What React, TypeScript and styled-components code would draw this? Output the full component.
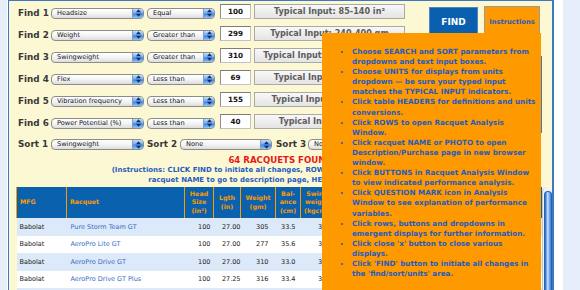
import React from 'react';
import styled, { createGlobalStyle } from 'styled-components';

const GlobalStyle = createGlobalStyle`
  html, body { margin: 0; padding: 0; }
  body {
    background: #e5eefa;
    font-family: "DejaVu Sans", Verdana, sans-serif;
    overflow: hidden;
  }
`;

const Page = styled.div`
  height: 290px;
  padding-left: 7px;
`;

const Frame = styled.div`
  width: 556px;
  height: 100%;
  box-sizing: border-box;
  background: #ffffff;
  padding: 0 9px 0 1px;
`;

const Panel = styled.div`
  position: relative;
  height: 100%;
  box-sizing: border-box;
  background: #fcf8d3;
  border: 1px solid #3f78c2;
  border-right-width: 2px;
  border-bottom: none;
  overflow: hidden;
`;

const Controls = styled.div`
  display: grid;
  grid-template-columns: 387px 113px;
  column-gap: 24px;
  padding: 1px 0 0 9px;
`;

const Rows = styled.div`
  display: flex;
  flex-direction: column;
`;

const Row = styled.div<{ $h: number }>`
  display: flex;
  align-items: center;
  height: ${(p) => p.$h}px;
`;

const Label = styled.span<{ $w: number; $ml?: number }>`
  width: ${(p) => p.$w}px;
  margin-left: ${(p) => p.$ml ?? 0}px;
  flex-shrink: 0;
  font-size: 8.8px;
  font-weight: bold;
  color: #383838;
  white-space: nowrap;
  margin-top: -1px;
`;

const Select = styled.div<{ $w: number; $ml?: number }>`
  display: flex;
  align-items: stretch;
  flex-shrink: 0;
  width: ${(p) => p.$w}px;
  margin-left: ${(p) => p.$ml ?? 0}px;
  height: 11px;
  box-sizing: border-box;
  border: 1px solid #8c8c8c;
  border-radius: 4px;
  background: linear-gradient(#ffffff, #f4f4f4 50%, #dddddd);
  overflow: hidden;
`;

const SelText = styled.span`
  flex: 1;
  padding-left: 5px;
  font-size: 6.6px;
  line-height: 9px;
  color: #111;
  white-space: nowrap;
  overflow: hidden;
`;

const SelArrow = styled.span`
  width: 10px;
  display: flex;
  align-items: center;
  justify-content: center;
  background: linear-gradient(#c4e0fc, #72acf0 45%, #3c83e6 55%, #94c6f7);
  border-left: 1px solid #7f9fc8;
`;

const NumBox = styled.div<{ $ml: number }>`
  width: 31px;
  height: 15px;
  margin-left: ${(p) => p.$ml}px;
  margin-top: -3px;
  flex-shrink: 0;
  box-sizing: border-box;
  background: #fff;
  border: 1px solid #c2c2c2;
  border-top-color: #7c7c7c;
  border-left-color: #8e8e8e;
  font-size: 7.2px;
  font-weight: bold;
  color: #111;
  text-align: center;
  line-height: 13px;
`;

const Typical = styled.div<{ $ml: number }>`
  width: 151px;
  height: 15px;
  margin-left: ${(p) => p.$ml}px;
  margin-top: -3px;
  flex-shrink: 0;
  box-sizing: border-box;
  background: linear-gradient(#f8f8f8, #e4e4e4);
  border: 1px solid #a9a9a9;
  font-size: 8.1px;
  font-weight: bold;
  color: #5c5c5c;
  text-align: center;
  line-height: 13px;
  white-space: nowrap;
  overflow: hidden;
`;

const Side = styled.div`
  display: flex;
  flex-direction: column;
`;

const ButtonRow = styled.div`
  display: flex;
  align-items: flex-start;
  gap: 6px;
  margin-top: 4px;
`;

const FindButton = styled.div`
  width: 49px;
  height: 29px;
  margin-top: 1px;
  box-sizing: border-box;
  background: #0a60ae;
  border: 1px solid #4a86c8;
  color: #fff;
  font-size: 9px;
  font-weight: bold;
  display: flex;
  align-items: center;
  justify-content: center;
`;

const InstrButton = styled.div`
  width: 56px;
  height: 31px;
  box-sizing: border-box;
  background: #ff9900;
  border: 1px solid #9a9a9a;
  color: #1f5cbf;
  font-size: 6.7px;
  font-weight: bold;
  display: flex;
  align-items: center;
  justify-content: center;
`;

const PhotoBox = styled.div`
  margin-top: 19px;
  height: 77px;
  box-sizing: border-box;
  border: 1px solid #3f78c2;
`;

const Status = styled.div`
  text-align: center;
  font-size: 8.6px;
  font-weight: bold;
  line-height: 11px;
  color: #e81818;
`;

const Hint = styled.div`
  text-align: center;
  font-size: 7px;
  font-weight: bold;
  line-height: 9.5px;
  color: #1f5cbf;
  white-space: nowrap;
`;

const TableArea = styled.div`
  display: flex;
  margin: 2px 0 0 7px;
  height: 110px;
`;

const TableWrap = styled.div`
  width: 527px;
  overflow: hidden;
`;

const Grid = styled.table`
  width: 527px;
  table-layout: fixed;
  border-collapse: collapse;
`;

const Th = styled.th<{ $align: 'left' | 'center' }>`
  height: 31px;
  padding: 0 3px;
  background: #0a62ae;
  border-left: 1px solid #ff9900;
  color: #ff9900;
  font-size: 6.3px;
  line-height: 8.5px;
  font-weight: bold;
  text-align: ${(p) => p.$align};
  vertical-align: middle;
  white-space: nowrap;
  overflow: hidden;
`;

const Tr = styled.tr<{ $odd: boolean }>`
  height: 17.5px;
  background: ${(p) => (p.$odd ? '#dce9f9' : '#ffffff')};
`;

const Td = styled.td<{ $align: 'left' | 'right'; $pl?: number; $pr?: number; $link?: boolean }>`
  padding: 0 ${(p) => p.$pr ?? 0}px 0 ${(p) => p.$pl ?? 0}px;
  font-size: 6.5px;
  color: ${(p) => (p.$link ? '#3a6cc4' : '#222')};
  text-align: ${(p) => p.$align};
  white-space: nowrap;
  overflow: hidden;
`;

const Scrollbar = styled.div`
  width: 10px;
  flex-shrink: 0;
  display: flex;
  flex-direction: column;
  box-sizing: border-box;
  background: #f2f2f2;
  border-left: 1px solid #c6c6c6;
  border-radius: 5px 5px 0 0;
  padding-top: 4px;
`;

const Thumb = styled.div`
  flex: 1;
  margin: 0 0.5px;
  border-radius: 4px 4px 0 0;
  border: 1px solid #2b5fb4;
  border-bottom: none;
  background: linear-gradient(90deg, #2a62c4 0%, #6ea8ee 25%, #c4e2ff 45%, #8fc2f8 62%, #3a78d6 100%);
`;

const Popup = styled.div`
  position: absolute;
  left: 313px;
  top: 32px;
  width: 219px;
  bottom: 0;
  background: #ff9900;
  padding-top: 14px;
  box-sizing: border-box;
`;

const List = styled.ul`
  margin: 0;
  padding: 0 0 0 30px;
  font-size: 7.2px;
  line-height: 10.1px;
  font-weight: bold;
  color: #1f5cbf;
  white-space: nowrap;
`;

const filters = [
  { n: 1, param: 'Headsize', op: 'Equal', value: '100', typical: 'Typical Input: 85-140 in²' },
  { n: 2, param: 'Weight', op: 'Greater than', value: '299', typical: 'Typical Input: 240-400 gm' },
  { n: 3, param: 'Swingweight', op: 'Greater than', value: '310', typical: 'Typical Input: 270-370 kgcm²' },
  { n: 4, param: 'Flex', op: 'Less than', value: '69', typical: 'Typical Input: 50-100 RA' },
  { n: 5, param: 'Vibration frequency', op: 'Less than', value: '155', typical: 'Typical Input: 120-180 Hz' },
  { n: 6, param: 'Power Potential (%)', op: 'Less than', value: '40', typical: 'Typical Input: 20-80 %' },
];

type Col = { head: string[]; w: number; align: 'left' | 'right'; pl?: number; pr?: number; link?: boolean };

const cols: Col[] = [
  { head: ['MFG'], w: 50, align: 'left', pl: 3 },
  { head: ['Racquet'], w: 118, align: 'left', pl: 4, link: true },
  { head: ['Head', 'Size', '(in²)'], w: 29, align: 'right', pr: 3 },
  { head: ['Lgth', '(in)'], w: 27, align: 'right', pr: 0 },
  { head: ['Weight', '(gm)'], w: 35, align: 'right', pr: 7 },
  { head: ['Bal-', 'ance', '(cm)'], w: 25, align: 'right', pr: 5 },
  { head: ['Swing', 'weight', '(kgcm²)'], w: 33, align: 'right', pr: 3 },
  { head: ['Flex', '(RA)'], w: 42, align: 'right', pr: 6 },
  { head: ['Vib', 'Freq', '(Hz)'], w: 42, align: 'right', pr: 6 },
  { head: ['Power', 'Pot.', '(%)'], w: 42, align: 'right', pr: 6 },
  { head: ['Twist', 'weight'], w: 42, align: 'right', pr: 6 },
  { head: ['Sweet', 'Spot'], w: 42, align: 'right', pr: 6 },
];

const rows: string[][] = [
  ['Babolat', 'Pure Storm Team GT', '100', '27.00', '305', '33.5', '318', '66', '147', '35', '14.1', '43'],
  ['Babolat', 'AeroPro Lite GT', '100', '27.00', '277', '35.6', '315', '67', '151', '38', '13.2', '41'],
  ['Babolat', 'AeroPro Drive GT', '100', '27.00', '310', '33.0', '322', '68', '152', '36', '14.0', '44'],
  ['Babolat', 'AeroPro Drive GT Plus', '100', '27.25', '316', '33.4', '335', '68', '150', '39', '14.3', '45'],
  ['Babolat', 'Pure Drive GT', '100', '27.00', '300', '32.0', '312', '68', '153', '37', '13.9', '42'],
];

const tips: string[][] = [
  ['Choose SEARCH and SORT parameters from', 'dropdowns and text input boxes.'],
  ['Choose UNITS for displays from units', 'dropdown — be sure your typed input', 'matches the TYPICAL INPUT indicators.'],
  ['Click table HEADERS for definitions and units', 'conversions.'],
  ['Click ROWS to open Racquet Analysis', 'Window.'],
  ['Click racquet NAME or PHOTO to open', 'Description/Purchase page in new browser', 'window.'],
  ['Click BUTTONS in Racquet Analysis Window', 'to view indicated performance analysis.'],
  ['Click QUESTION MARK icon in Analysis', 'Window to see explanation of performance', 'variables.'],
  ['Click rows, buttons and dropdowns in', 'emergent displays for further information.'],
  ["Click close 'x' button to close various", 'displays.'],
  ["Click 'FIND' button to initiate all changes in", "the 'find/sort/units' area."],
];

const Arrows = () => (
  <svg width="5" height="8" viewBox="0 0 5 8">
    <polygon points="0,3.3 2.5,0.3 5,3.3" fill="#172f5e" />
    <polygon points="0,4.7 2.5,7.7 5,4.7" fill="#172f5e" />
  </svg>
);

const Dropdown = ({ w, ml, value }: { w: number; ml?: number; value: string }) => (
  <Select $w={w} $ml={ml}>
    <SelText>{value}</SelText>
    <SelArrow>
      <Arrows />
    </SelArrow>
  </Select>
);

const multiLine = (lines: string[]) =>
  lines.map((l, i) => (
    <React.Fragment key={i}>
      {i > 0 && <br />}
      {l}
    </React.Fragment>
  ));

export default function App() {
  return (
    <>
      <GlobalStyle />
      <Page>
        <Frame>
          <Panel>
            <Controls>
              <Rows>
                {filters.map((f) => (
                  <Row key={f.n} $h={22}>
                    <Label $w={33}>Find {f.n}</Label>
                    <Dropdown w={93} value={f.param} />
                    <Dropdown w={68} ml={3} value={f.op} />
                    <NumBox $ml={5}>{f.value}</NumBox>
                    <Typical $ml={3}>{f.typical}</Typical>
                  </Row>
                ))}
                <Row $h={21}>
                  <Label $w={33}>Sort 1</Label>
                  <Dropdown w={93} value="Swingweight" />
                  <Label $w={33} $ml={3}>Sort 2</Label>
                  <Dropdown w={92} value="None" />
                  <Label $w={32} $ml={4}>Sort 3</Label>
                  <Dropdown w={92} value="None" />
                </Row>
              </Rows>
              <Side>
                <ButtonRow>
                  <FindButton>FIND</FindButton>
                  <InstrButton>Instructions</InstrButton>
                </ButtonRow>
                <PhotoBox />
              </Side>
            </Controls>
            <Status>64 RACQUETS FOUND</Status>
            <Hint>
              (Instructions: CLICK FIND to initiate all changes, ROWS for Racquet Analysis Window,
              <br />
              racquet NAME to go to description page, HEADERS for definitions.)
            </Hint>
            <TableArea>
              <TableWrap>
                <Grid>
                  <colgroup>
                    {cols.map((c, i) => (
                      <col key={i} style={{ width: c.w }} />
                    ))}
                  </colgroup>
                  <thead>
                    <tr>
                      {cols.map((c, i) => (
                        <Th key={i} $align={c.align === 'left' ? 'left' : 'center'}>
                          {multiLine(c.head)}
                        </Th>
                      ))}
                    </tr>
                  </thead>
                  <tbody>
                    {rows.map((r, ri) => (
                      <Tr key={ri} $odd={ri % 2 === 0}>
                        {r.map((v, ci) => (
                          <Td
                            key={ci}
                            $align={cols[ci].align}
                            $pl={cols[ci].pl}
                            $pr={cols[ci].pr}
                            $link={cols[ci].link}
                          >
                            {v}
                          </Td>
                        ))}
                      </Tr>
                    ))}
                  </tbody>
                </Grid>
              </TableWrap>
              <Scrollbar>
                <Thumb />
              </Scrollbar>
            </TableArea>
            <Popup>
              <List>
                {tips.map((t, i) => (
                  <li key={i}>{multiLine(t)}</li>
                ))}
              </List>
            </Popup>
          </Panel>
        </Frame>
      </Page>
    </>
  );
}
